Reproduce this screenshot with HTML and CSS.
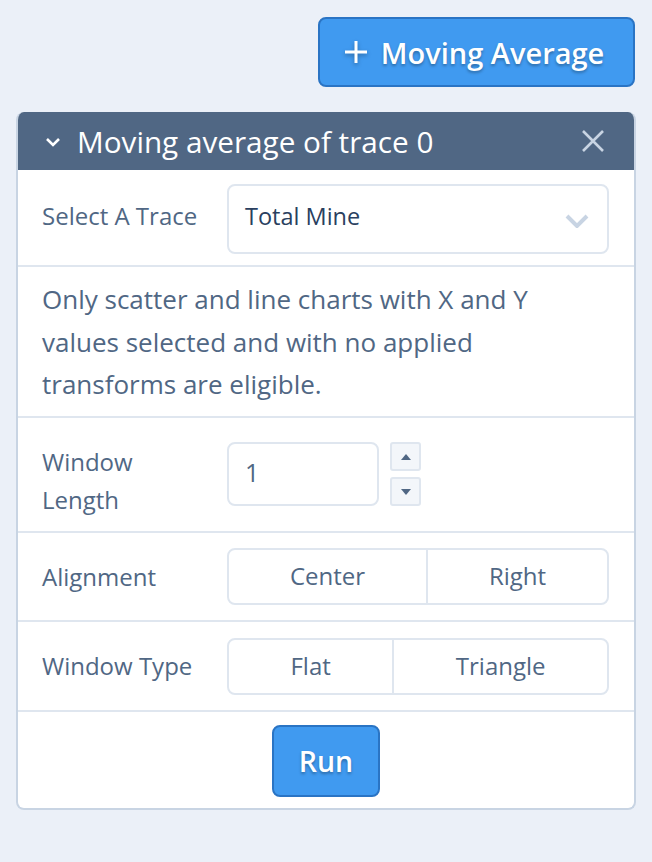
FILE: index.html
```html
<!DOCTYPE html>
<html>
<head>
<meta charset="utf-8">
<link rel="stylesheet" href="styles.css">
</head>
<body>
<div class="page">
  <div class="toolbar">
    <button class="btn-primary add-btn">
      <svg class="plus" width="24" height="24" viewBox="0 0 24 24"><path d="M12 1v22M1 12h22" stroke="#fff" stroke-width="3" fill="none"/></svg>
      <span>Moving Average</span>
    </button>
  </div>
  <div class="panel">
    <div class="panel-head">
      <svg class="fold" width="16" height="10" viewBox="0 0 16 10"><path d="M2 2l6 6 6-6" stroke="#fff" stroke-width="2.6" fill="none"/></svg>
      <span class="panel-title">Moving average of trace 0</span>
      <svg class="close" width="24" height="24" viewBox="0 0 24 24"><path d="M2 2l20 20M22 2L2 22" stroke="#c8d4e3" stroke-width="2.6" fill="none"/></svg>
    </div>
    <div class="row row-select">
      <div class="label">Select A Trace</div>
      <div class="select">
        <span>Total Mine</span>
        <svg width="24" height="14" viewBox="0 0 24 14"><path d="M2 2l10 10 10-10" stroke="#c8d4e3" stroke-width="4" fill="none"/></svg>
      </div>
    </div>
    <div class="row info">Only scatter and line charts with X and Y values selected and with no applied transforms are eligible.</div>
    <div class="row row-length">
      <div class="label">Window<br>Length</div>
      <div class="number">
        <div class="num-input">1</div>
        <div class="spin">
          <div class="spin-btn"><svg width="12" height="8" viewBox="0 0 12 8"><path d="M1 7L6 1l5 6z" fill="#506784"/></svg></div>
          <div class="spin-btn"><svg width="12" height="8" viewBox="0 0 12 8"><path d="M1 1l5 6 5-6z" fill="#506784"/></svg></div>
        </div>
      </div>
    </div>
    <div class="row row-radio">
      <div class="label">Alignment</div>
      <div class="radio">
        <div class="opt">Center</div>
        <div class="opt">Right</div>
      </div>
    </div>
    <div class="row row-radio">
      <div class="label">Window Type</div>
      <div class="radio">
        <div class="opt">Flat</div>
        <div class="opt">Triangle</div>
      </div>
    </div>
    <div class="run-row">
      <button class="btn-primary run-btn">Run</button>
    </div>
  </div>
</div>
</body>
</html>
```

FILE: styles.css
```css
html, body {
  margin: 0;
  padding: 0;
  background: #ebf0f8;
  font-family: "Open Sans", "Noto Sans", sans-serif;
}
.page {
  padding: 17px 16px 0 16px;
}
.toolbar {
  display: flex;
  justify-content: flex-end;
}
.btn-primary {
  background: #409af0;
  border: 2px solid #2a74c4;
  border-radius: 8px;
  color: #fff;
  font-family: "Open Sans", sans-serif;
  font-weight: 600;
  font-size: 29px;
  text-shadow: 0 2px 3px rgba(0, 0, 0, 0.3);
  display: flex;
  align-items: center;
  justify-content: center;
  box-sizing: border-box;
  padding: 0;
}
.add-btn {
  width: 317px;
  height: 70px;
  gap: 13px;
  margin-right: 1px;
}
.add-btn span {
  margin-top: 1px;
}
.plus {
  margin-left: -5px;
  filter: drop-shadow(0 2px 2px rgba(0,0,0,0.3));
}
.panel {
  margin-top: 25px;
  background: #fff;
  border: 2px solid #c8d4e3;
  border-top: none;
  border-radius: 8px;
  overflow: hidden;
  height: 698px;
  box-sizing: border-box;
  display: flex;
  flex-direction: column;
}
.panel-head {
  background: #506784;
  height: 58px;
  display: flex;
  align-items: center;
  padding: 0 31px 0 29px;
  color: #fff;
  margin: 0 -2px;
}
.fold {
  margin-right: 16px;
  margin-top: 2px;
}
.panel-title {
  flex: 1;
  font-size: 29.7px;
  font-weight: 400;
  margin-top: 0px;
}
.row {
  border-bottom: 2px solid #dfe6ef;
  display: flex;
  padding: 0 25px 0 24px;
}
.label {
  width: 185px;
  flex: none;
  font-size: 24px;
  color: #506784;
  line-height: 38px;
}
.row-select {
  height: 97px;
  box-sizing: border-box;
  align-items: center;
}
.row-select .label {
  margin-top: -4px;
}
.select {
  flex: 1;
  height: 70px;
  box-sizing: border-box;
  border: 2px solid #dfe6ef;
  border-radius: 8px;
  display: flex;
  align-items: center;
  justify-content: space-between;
  padding: 0 18px 0 16px;
  font-size: 23.5px;
  color: #2a3f5f;
  margin-top: 2px;
}
.select span {
  margin-top: -6px;
}
.select svg {
  margin-top: 4px;
}
.info {
  display: block;
  box-sizing: border-box;
  height: 151px;
  font-size: 26px;
  line-height: 42.5px;
  color: #506784;
  padding-top: 11px;
  padding-right: 70px;
}
.row-length {
  height: 115px;
  box-sizing: border-box;
  padding-top: 24px;
  align-items: flex-start;
}
.row-length .label {
  margin-top: 1px;
}
.number {
  display: flex;
  gap: 11px;
}
.num-input {
  width: 152px;
  height: 64px;
  box-sizing: border-box;
  border: 2px solid #dfe6ef;
  border-radius: 8px;
  font-size: 25px;
  color: #506784;
  padding: 0 16px;
  display: flex;
  align-items: center;
  padding-bottom: 4px;
}
.spin {
  display: flex;
  flex-direction: column;
  justify-content: space-between;
}
.spin-btn {
  width: 31px;
  height: 29px;
  box-sizing: border-box;
  background: #f3f6fa;
  border: 2px solid #dfe6ef;
  border-radius: 3px;
  display: flex;
  align-items: center;
  justify-content: center;
}
.row-radio {
  height: 89px;
  box-sizing: border-box;
  align-items: center;
}
.row-radio + .row-radio {
  height: 90px;
}
.radio {
  flex: 1;
  display: flex;
  height: 57px;
  box-sizing: border-box;
  border: 2px solid #dfe6ef;
  border-radius: 8px;
  overflow: hidden;
}
.opt {
  flex: 1 1 auto;
  display: flex;
  align-items: center;
  justify-content: center;
  font-size: 24px;
  color: #506784;
  padding-bottom: 2px;
}
.opt + .opt {
  border-left: 2px solid #dfe6ef;
}
.run-row {
  flex: 1;
  display: flex;
  justify-content: center;
  padding-top: 13px;
}
.run-btn {
  width: 108px;
  height: 72px;
  font-size: 28.5px;
}
```
